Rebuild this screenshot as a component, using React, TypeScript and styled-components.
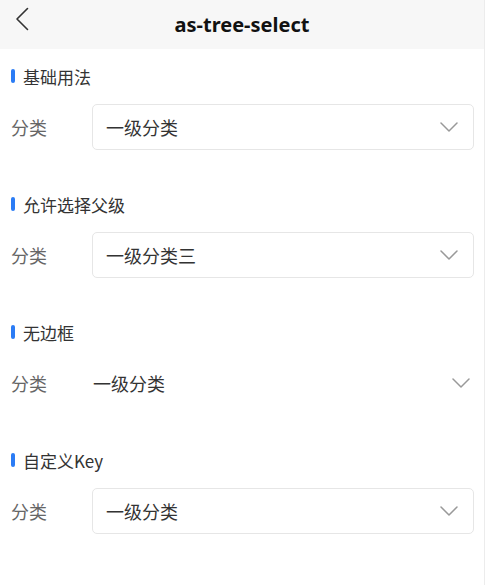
import React from "react";
import styled, { createGlobalStyle } from "styled-components";

const Global = createGlobalStyle`
  html, body { margin: 0; padding: 0; background: #fff; }
  body { font-family: "Noto Sans", "Noto Sans CJK SC", sans-serif; }
`;

const Page = styled.div`
  width: 485px;
  min-height: 585px;
  border-right: 1px solid #ececec;
  background: #fff;
  box-sizing: border-box;
`;

const Header = styled.header`
  height: 49px;
  background: #f7f7f7;
  display: flex;
  align-items: center;
  justify-content: center;
  position: relative;
`;

const Back = styled.button`
  position: absolute;
  left: 14px;
  top: 6px;
  width: 16px;
  height: 26px;
  border: 0;
  padding: 0;
  background: none;
  display: flex;
  align-items: center;
  justify-content: center;
`;

const Title = styled.h1`
  margin: 0;
  font-family: "Noto Sans", "Noto Sans CJK SC", sans-serif;
  font-weight: 700;
  font-size: 20px;
  color: #111;
`;

const Section = styled.section`
  padding: 17px 10px 27px 11px;
  display: flex;
  flex-direction: column;
  gap: 18px;
`;

const SectionTitle = styled.div`
  display: flex;
  align-items: center;
  gap: 8px;
  height: 20px;
  font-family: "Noto Sans CJK SC", sans-serif;
  font-size: 17px;
  color: #333;
  &::before {
    content: "";
    width: 4px;
    height: 14px;
    border-radius: 2px;
    background: #2b7cf5;
  }
`;

const Row = styled.div`
  display: flex;
  align-items: center;
  height: 46px;
`;

const Label = styled.span`
  width: 81px;
  flex: none;
  font-family: "Noto Sans CJK SC", sans-serif;
  font-size: 18px;
  color: #666;
`;

const Select = styled.div<{ $bordered: boolean }>`
  flex: 1;
  height: 46px;
  box-sizing: border-box;
  display: flex;
  align-items: center;
  justify-content: space-between;
  padding: ${(p) => (p.$bordered ? "0 15px 0 13px" : "0 3px 0 0")};
  border: ${(p) => (p.$bordered ? "1px solid #e6e6e6" : "1px solid transparent")};
  border-radius: 5px;
  font-family: "Noto Sans CJK SC", sans-serif;
  font-size: 18px;
  color: #333;
`;

const Chevron = () => (
  <svg width="18" height="10" viewBox="0 0 18 10" fill="none">
    <path d="M1 1 L9 9 L17 1" stroke="#999" strokeWidth="1.5" strokeLinecap="round" strokeLinejoin="round" />
  </svg>
);

const sections = [
  { title: "基础用法", value: "一级分类", bordered: true },
  { title: "允许选择父级", value: "一级分类三", bordered: true },
  { title: "无边框", value: "一级分类", bordered: false },
  { title: "自定义Key", value: "一级分类", bordered: true },
];

export default function App() {
  return (
    <>
      <Global />
      <Page>
        <Header>
          <Back aria-label="back">
            <svg width="14" height="24" viewBox="0 0 14 24" fill="none">
              <path d="M12.5 1.5 L2 12 L12.5 22.5" stroke="#333" strokeWidth="1.6" strokeLinecap="round" strokeLinejoin="round" />
            </svg>
          </Back>
          <Title>as-tree-select</Title>
        </Header>
        {sections.map((s) => (
          <Section key={s.title}>
            <SectionTitle>{s.title}</SectionTitle>
            <Row>
              <Label>分类</Label>
              <Select $bordered={s.bordered}>
                <span>{s.value}</span>
                <Chevron />
              </Select>
            </Row>
          </Section>
        ))}
      </Page>
    </>
  );
}
